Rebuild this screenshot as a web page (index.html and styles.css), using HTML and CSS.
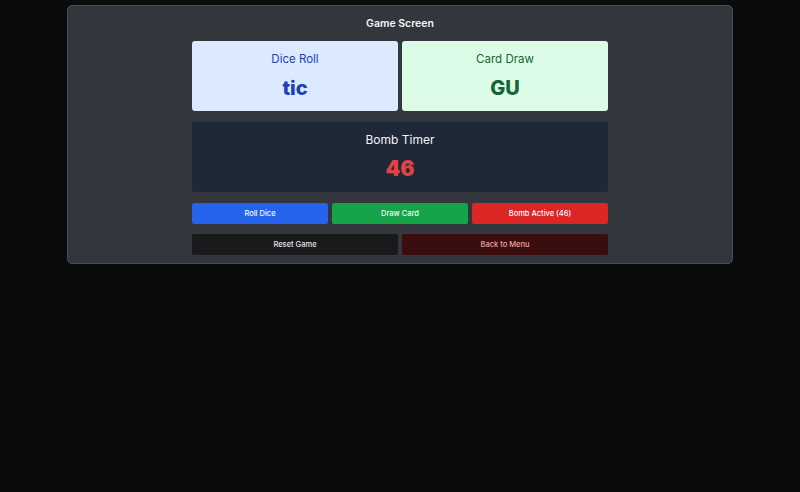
FILE: index.html
```html
<!DOCTYPE html>
<html>
<head>
<meta charset="utf-8">
<link rel="stylesheet" href="styles.css">
</head>
<body>
<div class="panel">
  <h1 class="title">Game Screen</h1>
  <div class="content">
    <div class="cards">
      <div class="card card-dice">
        <div class="card-label">Dice Roll</div>
        <div class="card-value">tic</div>
      </div>
      <div class="card card-draw">
        <div class="card-label">Card Draw</div>
        <div class="card-value">GU</div>
      </div>
    </div>
    <div class="timer">
      <div class="timer-label">Bomb Timer</div>
      <div class="timer-value">46</div>
    </div>
    <div class="actions">
      <button class="btn btn-blue">Roll Dice</button>
      <button class="btn btn-green">Draw Card</button>
      <button class="btn btn-red">Bomb Active (46)</button>
    </div>
    <div class="actions actions-two">
      <button class="btn btn-dark">Reset Game</button>
      <button class="btn btn-maroon">Back to Menu</button>
    </div>
  </div>
</div>
</body>
</html>
```

FILE: styles.css
```css
html, body {
  margin: 0;
  padding: 0;
  background: #0a0b0d;
  font-family: Inter, "Noto Sans", sans-serif;
}
body {
  padding-top: 5px;
}
.panel {
  width: 666px;
  box-sizing: border-box;
  margin: 0 auto;
  background: #33363c;
  border: 1px solid #484c55;
  border-radius: 5px;
  padding: 9px 0 8px;
}
.title {
  margin: 0 0 9px;
  text-align: center;
  color: #f4f4f5;
  font-size: 10.5px;
  line-height: 17px;
  font-weight: 600;
}
.content {
  width: 416px;
  margin: 0 auto;
}
.cards {
  display: grid;
  grid-template-columns: 1fr 1fr;
  gap: 4px;
}
.card {
  height: 70px;
  box-sizing: border-box;
  border-radius: 3px;
  padding-top: 10px;
  text-align: center;
}
.card-dice { background: #dbeafe; color: #1e40af; }
.card-draw { background: #dcfce7; color: #166534; }
.card-label {
  font-size: 11.5px;
  line-height: 16px;
}
.card-value {
  margin-top: 7px;
  font-size: 20px;
  line-height: 28px;
  font-weight: 800;
}
.timer {
  margin-top: 11px;
  height: 70px;
  box-sizing: border-box;
  padding-top: 9px;
  background: #1f2836;
  border-radius: 2px;
  text-align: center;
}
.timer-label {
  color: #f4f4f5;
  font-size: 12px;
  line-height: 18px;
}
.timer-value {
  margin-top: 6px;
  color: #e04343;
  font-size: 21px;
  line-height: 28px;
  font-weight: 900;
}
.actions {
  margin-top: 11px;
  display: grid;
  grid-template-columns: 1fr 1fr 1fr;
  gap: 4px;
}
.actions-two {
  margin-top: 10px;
  grid-template-columns: 1fr 1fr;
}
.btn {
  height: 21px;
  border: none;
  border-radius: 2px;
  font-family: Inter, "Noto Sans", sans-serif;
  font-size: 7.5px;
  font-weight: 500;
  color: #f5f7ff;
  padding: 0;
}
.btn-blue { background: #2563eb; }
.btn-green { background: #16a34a; }
.btn-red { background: #dc2626; }
.btn-dark { background: #1a1a1c; color: #e4e4e7; }
.btn-maroon { background: #3a0d0e; color: #f0a3a3; }
```
